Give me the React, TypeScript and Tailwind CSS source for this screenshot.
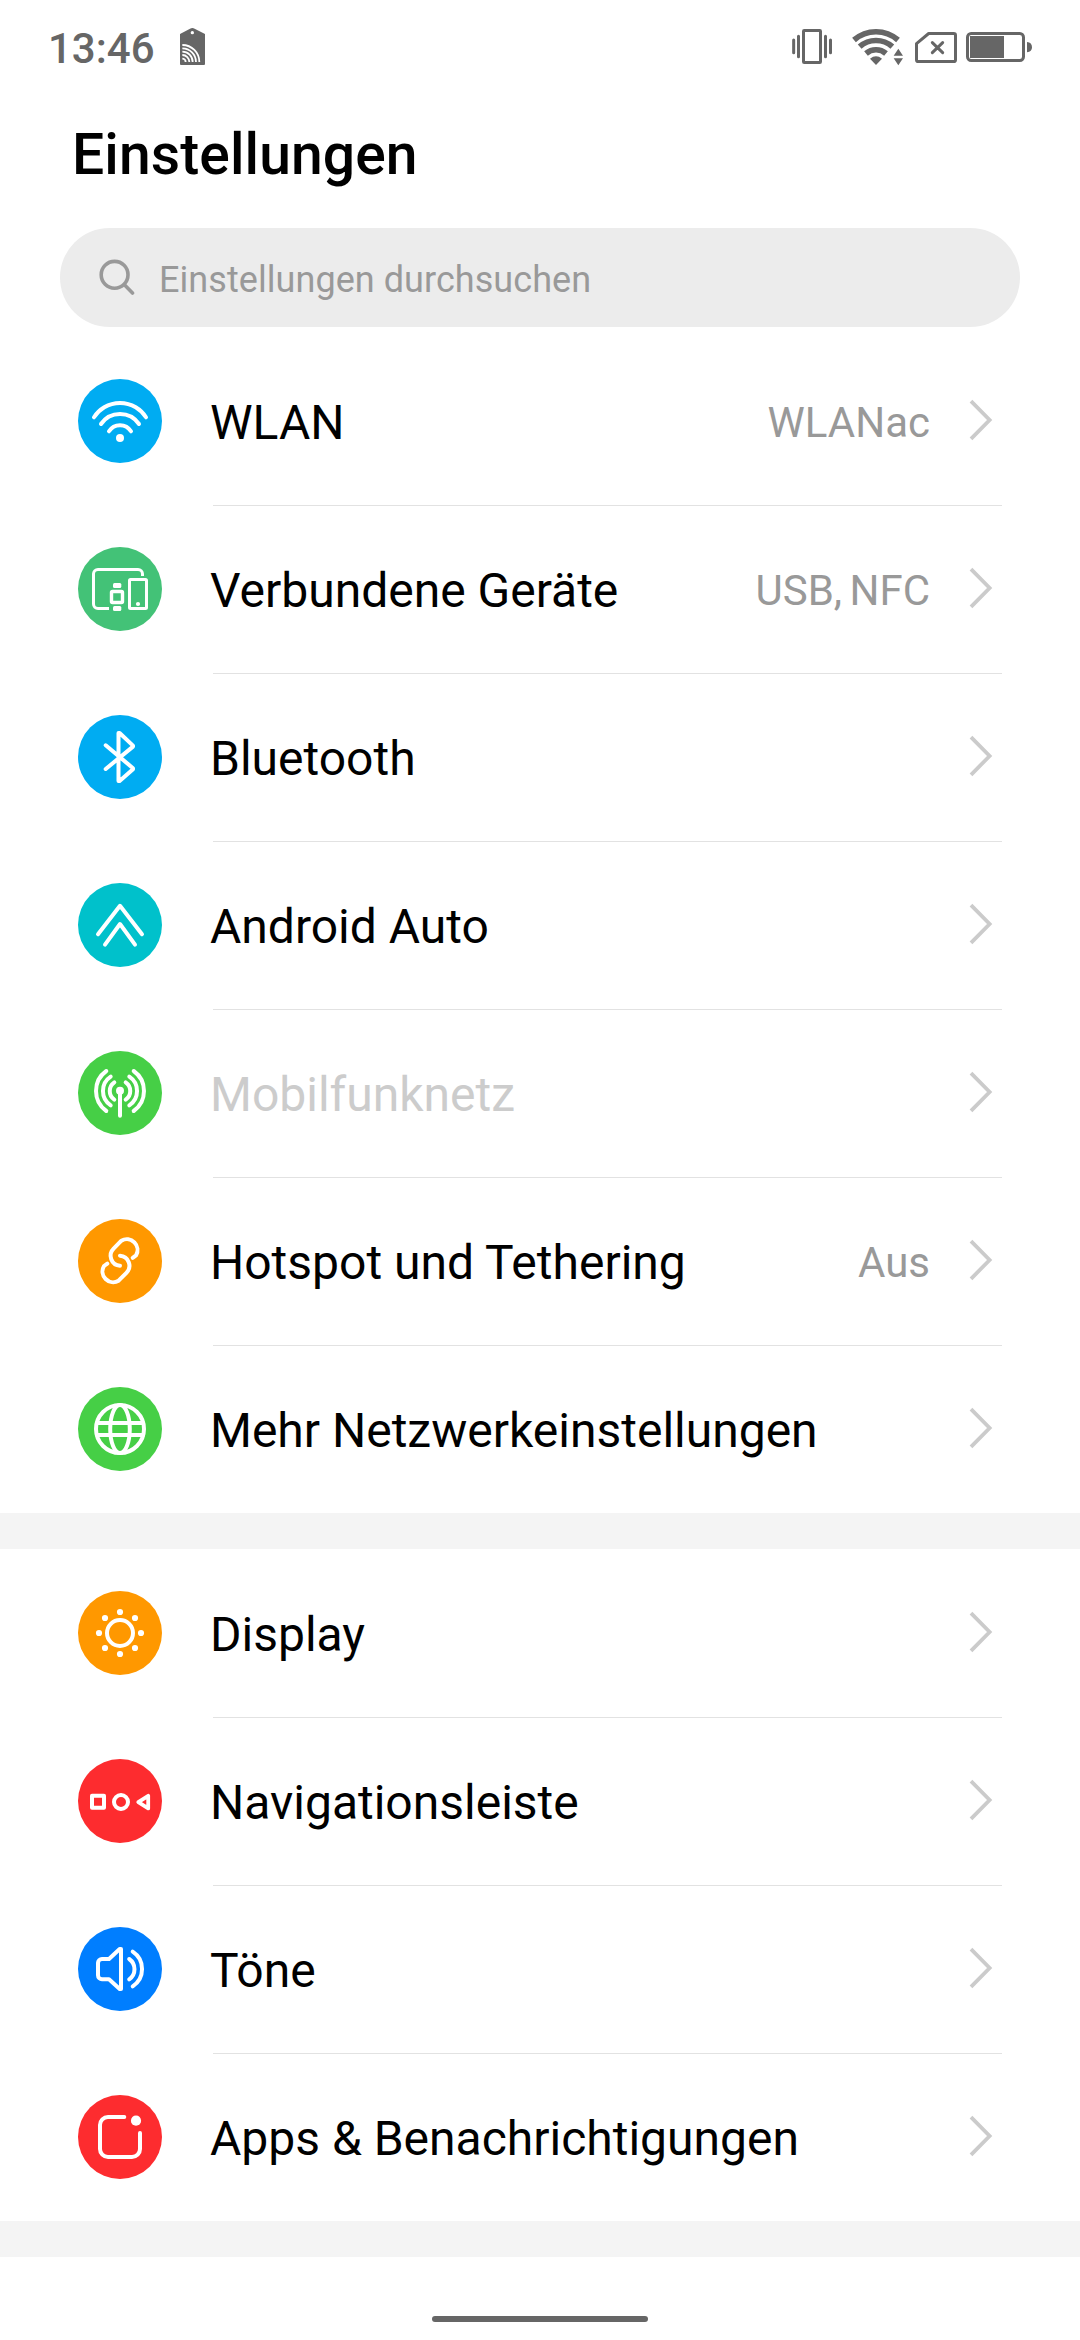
import type { ReactNode } from "react";

type Item = { label: string; color: string; icon: ReactNode; value?: string; disabled?: boolean };

const LINK_HALF = "M54.7 38.8L58 36.4A10.7 10.7 0 0 0 43.4 21.7L35.6 29.6A10 10 0 0 0 42 46.7";

const network: Item[] = [
  {
    label: "WLAN",
    value: "WLANac",
    color: "bg-[#00acf2]",
    icon: (
      <>
        <path d="M16 38.3A30.8 30.8 0 0 1 68 38.3M23 45A23 23 0 0 1 61 45M31 52.3A12.9 12.9 0 0 1 53 52.3" />
        <circle cx="42" cy="59" r="4" fill="white" stroke="none" />
      </>
    ),
  },
  {
    label: "Verbundene Geräte",
    value: "USB, NFC",
    color: "bg-[#43c277]",
    icon: (
      <g strokeWidth="3" strokeLinecap="butt">
        <path d="M64.5 29V27a4.5 4.5 0 0 0-4.5-4.5H20a4.5 4.5 0 0 0-4.5 4.5V57a4.5 4.5 0 0 0 4.5 4.5H31" />
        <rect x="33.5" y="44.5" width="11" height="11" rx="1" strokeWidth="3.4" />
        <rect x="35" y="36" width="8.3" height="5" rx="1.5" fill="white" stroke="none" />
        <rect x="35" y="59" width="8.3" height="5" rx="1.5" fill="white" stroke="none" />
        <rect x="51.5" y="32.5" width="17" height="29" rx="1" />
        <circle cx="60" cy="57" r="2.1" fill="white" stroke="none" />
      </g>
    ),
  },
  {
    label: "Bluetooth",
    color: "bg-[#00acf2]",
    icon: <path d="M27.7 30.3L55 53.2V54.2L41.6 66H40.5V18h1.1L55 30.6V31.6L27.7 54" />,
  },
  {
    label: "Android Auto",
    color: "bg-[#00c1cb]",
    icon: <path d="M20 51.2L42 22.8L64 51.2M27 61.6L42 41L57 61.6" />,
  },
  {
    label: "Mobilfunknetz",
    disabled: true,
    color: "bg-[#46cf46]",
    icon: (
      <>
        <circle cx="42" cy="39.7" r="4" fill="white" stroke="none" />
        <path d="M42 40V64.7M28.3 20A24.6 24.6 0 0 0 28.3 60M32.7 25.7A17.1 17.1 0 0 0 32.7 54.3M36.3 31.3A10.5 10.5 0 0 0 36.3 48.6M55.7 20A24.6 24.6 0 0 1 55.7 60M51.3 25.7A17.1 17.1 0 0 1 51.3 54.3M47.7 31.3A10.5 10.5 0 0 1 47.7 48.6" />
      </>
    ),
  },
  {
    label: "Hotspot und Tethering",
    value: "Aus",
    color: "bg-[#ff9800]",
    icon: (
      <>
        <path d={LINK_HALF} />
        <path d={LINK_HALF} transform="rotate(180 42 41.7)" />
      </>
    ),
  },
  {
    label: "Mehr Netzwerkeinstellungen",
    color: "bg-[#46cf46]",
    icon: (
      <>
        <circle cx="42" cy="42" r="24" />
        <ellipse cx="42" cy="42" rx="9.8" ry="24" />
        <path d="M19 36H65M19 48H65" />
      </>
    ),
  },
];

const device: Item[] = [
  {
    label: "Display",
    color: "bg-[#ff9800]",
    icon: (
      <>
        <circle cx="42" cy="42" r="13" />
        <path d="M42 21h0M42 63h0M21 42h0M63 42h0M27 27h0M57 27h0M27 57h0M57 57h0" strokeWidth="6.2" />
      </>
    ),
  },
  {
    label: "Navigationsleiste",
    color: "bg-[#fd2c2f]",
    icon: (
      <>
        <rect x="14" y="36.7" width="12" height="12" />
        <circle cx="43" cy="43" r="7" />
        <path d="M70.2 36.8V49.4L60.3 43.1Z" strokeWidth="3.8" />
      </>
    ),
  },
  {
    label: "Töne",
    color: "bg-[#007eff]",
    icon: (
      <path d="M43 22V62H41.7L31 52.3H24A4 4 0 0 1 20 48.3V36A4 4 0 0 1 24 32H31L41.7 22ZM51.2 32A12.4 12.4 0 0 1 51.2 52.3M54.7 24.7A20.7 20.7 0 0 1 54.7 59.3" />
    ),
  },
  {
    label: "Apps & Benachrichtigungen",
    color: "bg-[#fd2c2f]",
    icon: (
      <>
        <path d="M46.3 22H30A8 8 0 0 0 22 30V54A8 8 0 0 0 30 62H54A8 8 0 0 0 62 54V38" />
        <circle cx="58" cy="25.7" r="5.1" fill="white" stroke="none" />
      </>
    ),
  },
];

function Row({ item, divided }: { item: Item; divided: boolean }) {
  return (
    <li className="flex h-[168px] pl-[78px] pr-[78px]">
      <span className={`mt-[42px] size-[84px] shrink-0 rounded-full ${item.color}`}>
        <svg
          viewBox="0 0 84 84"
          className="size-[84px]"
          fill="none"
          stroke="white"
          strokeWidth="4"
          strokeLinecap="round"
          strokeLinejoin="round"
        >
          {item.icon}
        </svg>
      </span>
      <div className={`ml-[51px] flex flex-1 items-center border-t ${divided ? "border-[#e2e2e2]" : "border-transparent"}`}>
        <span
          className={`-ml-[3px] flex-1 whitespace-nowrap pt-[2px] text-[48px] leading-[56px] ${item.disabled ? "text-[#cccccc]" : "text-black"}`}
        >
          {item.label}
        </span>
        {item.value && (
          <span className="pt-[2px] text-[42px] leading-[50px] text-[#999999] [word-spacing:-3px]">{item.value}</span>
        )}
        <svg viewBox="0 0 24 42" className="-mt-[3px] mr-[9px] ml-[39px] h-[42px] w-6" fill="none" stroke="#cbcbcb" strokeWidth="3.8">
          <path d="M2 2.2L20.6 21L2 39.8" />
        </svg>
      </div>
    </li>
  );
}

function Section({ items }: { items: Item[] }) {
  return (
    <section>
      <ul>
        {items.map((item, i) => (
          <Row key={item.label} item={item} divided={i > 0} />
        ))}
      </ul>
      <div className="h-9 bg-[#f4f4f4]" />
    </section>
  );
}

function StatusBar() {
  return (
    <div className="flex h-24 items-center pl-[48px] text-[#666666]">
      <span className="pt-px text-[42px] font-medium leading-[50px]">13:46</span>
      <svg viewBox="450 54 75 111" className="-mt-[3px] ml-[25px] h-[37px] w-[25px]" fill="currentColor">
        <path d="M450 72L480 56Q487 52 494 56L525 72V162Q525 165 522 165H453Q450 165 450 162Z" />
        <circle cx="487" cy="68" r="5" fill="white" />
        <path
          d="M457 105A51 51 0 0 1 508 156M457 115A41 41 0 0 1 498 156M457 125A31 31 0 0 1 488 156M457 135A21 21 0 0 1 478 156M457 146A10 10 0 0 1 467 156"
          fill="none"
          stroke="white"
          strokeWidth="5.4"
        />
      </svg>
      <svg viewBox="60 51 740 120" className="ml-auto mr-[43px] -mt-[2px] h-10 w-[247px]" preserveAspectRatio="xMinYMin meet" fill="none" stroke="currentColor" strokeWidth="9">
        <rect x="100.5" y="61.5" width="51" height="96" rx="2" />
        <path d="M71 90V128M85.5 79V140M166.5 79V140M181.5 90V128" strokeLinecap="round" />
        <path d="M252 90A100 100 0 0 1 384 90M269 110A74 74 0 0 1 367 110M288 130.5A46 46 0 0 1 348 130.5" strokeWidth="17" />
        <path d="M318 165L300 146Q318 132 336 146ZM371 137H399L385 116ZM371 145H399L385 166Z" fill="currentColor" stroke="none" />
        <path d="M476 70.5H551Q556.5 70.5 556.5 76V149Q556.5 154.5 551 154.5H445Q439.5 154.5 439.5 149V101Z" strokeLinejoin="round" />
        <path d="M487 98L518 128M518 98L487 128" strokeLinecap="round" />
        <rect x="592.5" y="70.5" width="168" height="81" rx="11" />
        <rect x="600" y="78" width="102" height="66" fill="currentColor" stroke="none" />
        <path d="M771 96Q786 98 786 111.5Q786 125 771 127Z" fill="currentColor" stroke="none" />
      </svg>
    </div>
  );
}

export default function App() {
  return (
    <main className="flex h-[2340px] w-[1080px] flex-col overflow-hidden bg-white font-['Roboto',sans-serif]">
      <StatusBar />
      <h1 className="mt-[26px] pl-[72px] text-[57px] font-medium leading-[66px] tracking-[0.1px] text-black">Einstellungen</h1>
      <div className="mx-[60px] mt-10 mb-[10px] flex h-[99px] items-center rounded-full bg-[#ececec] pl-[39px] text-[#999999]">
        <svg viewBox="0 0 36 36" className="-mt-[2px] size-9" fill="none" stroke="currentColor" strokeWidth="3.6" strokeLinecap="round">
          <circle cx="15.6" cy="15.8" r="13.4" />
          <path d="M25.4 25.8L33.5 34" />
        </svg>
        <span className="ml-6 pt-1 text-[36px] leading-[42px] tracking-[0.06px]">Einstellungen durchsuchen</span>
      </div>
      <Section items={network} />
      <Section items={device} />
      <div className="mx-auto mt-[59px] h-1.5 w-[216px] rounded-full bg-[#666666]" />
    </main>
  );
}
